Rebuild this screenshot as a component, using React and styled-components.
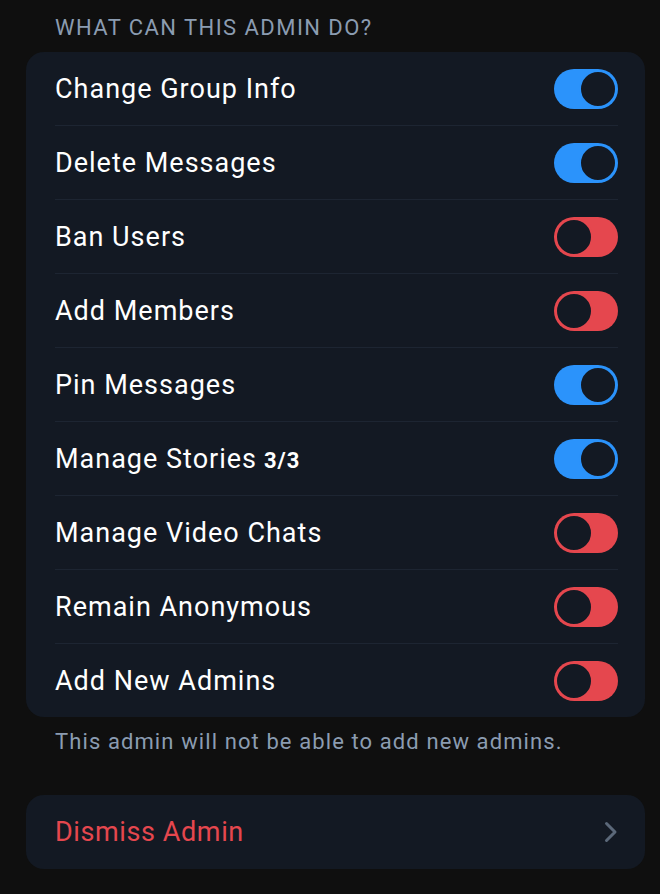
import React from "react";
import styled, { createGlobalStyle } from "styled-components";

const GlobalStyle = createGlobalStyle`
  html, body {
    margin: 0;
    padding: 0;
    background: #0f0f0f;
    font-family: Roboto, "Liberation Sans", sans-serif;
  }
`;

const rights = [
  { label: "Change Group Info", on: true },
  { label: "Delete Messages", on: true },
  { label: "Ban Users", on: false },
  { label: "Add Members", on: false },
  { label: "Pin Messages", on: true },
  { label: "Manage Stories", count: "3/3", on: true },
  { label: "Manage Video Chats", on: false },
  { label: "Remain Anonymous", on: false },
  { label: "Add New Admins", on: false },
];

function App() {
  return (
    <Page>
      <GlobalStyle />
      <SectionTitle>What can this admin do?</SectionTitle>
      <Card>
        {rights.map((r, i) => (
          <Row key={r.label} last={i === rights.length - 1}>
            <Label>
              {r.label}
              {r.count && <Count>{r.count}</Count>}
            </Label>
            <Toggle on={r.on}>
              <Knob on={r.on} />
            </Toggle>
          </Row>
        ))}
      </Card>
      <Hint>This admin will not be able to add new admins.</Hint>
      <Card>
        <ActionRow>
          <Danger>Dismiss Admin</Danger>
          <svg width="14" height="22" viewBox="0 0 14 22">
            <path
              d="M2.5 2.5 L11 11 L2.5 19.5"
              fill="none"
              stroke="#5b6879"
              strokeWidth="3"
              strokeLinecap="round"
              strokeLinejoin="round"
            />
          </svg>
        </ActionRow>
      </Card>
    </Page>
  );
}

export default App;

const Page = styled.div`
  width: 660px;
  height: 894px;
  box-sizing: border-box;
  padding: 14px 15px 0 26px;
  overflow: hidden;
`;

const SectionTitle = styled.div`
  padding-left: 29px;
  height: 38px;
  font-size: 22px;
  line-height: 28px;
  text-transform: uppercase;
  color: #8b9cb1;
  letter-spacing: 1.45px;
`;

const Card = styled.div`
  background: #131923;
  border-radius: 18px;
  padding: 0 27px 0 29px;
`;

const Row = styled.div`
  height: 73px;
  display: flex;
  align-items: center;
  justify-content: space-between;
  border-bottom: ${(p) => (p.last ? "none" : "1px solid #1d2532")};
`;

const Label = styled.div`
  font-size: 27px;
  color: #ffffff;
  letter-spacing: 1px;
  display: flex;
  align-items: baseline;
`;

const Count = styled.span`
  font-size: 22px;
  font-weight: 700;
  letter-spacing: 1px;
  margin-left: 7px;
`;

const Toggle = styled.div`
  width: 64px;
  height: 40px;
  border-radius: 20px;
  background: ${(p) => (p.on ? "#2b93fb" : "#e5474e")};
  display: flex;
  align-items: center;
  justify-content: ${(p) => (p.on ? "flex-end" : "flex-start")};
  padding: 0 1px;
  box-sizing: border-box;
`;

const Knob = styled.div`
  width: 38px;
  height: 38px;
  border-radius: 50%;
  box-sizing: border-box;
  background: #131923;
  border: 2px solid ${(p) => (p.on ? "#2b93fb" : "#e5474e")};
`;

const Hint = styled.div`
  padding: 11px 0 0 29px;
  height: 67px;
  font-size: 22px;
  line-height: 28px;
  color: #8b9cb1;
  letter-spacing: 1.1px;
`;

const ActionRow = styled.div`
  height: 74px;
  display: flex;
  align-items: center;
  justify-content: space-between;
`;

const Danger = styled.div`
  font-size: 27px;
  color: #e5474e;
  letter-spacing: 0.6px;
`;
